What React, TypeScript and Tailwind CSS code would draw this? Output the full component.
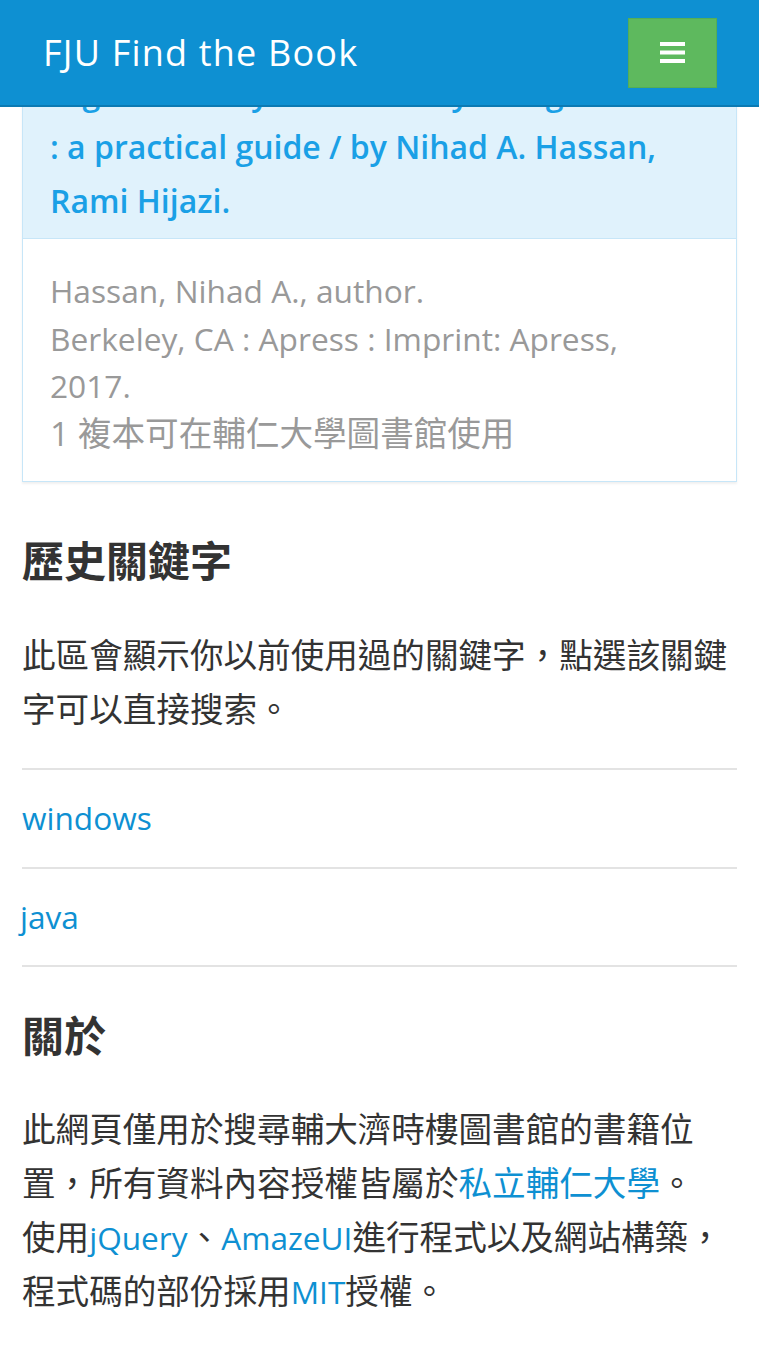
import React from "react";

function Hamburger() {
  return (
    <svg width="25" height="22" viewBox="0 0 25 22" aria-hidden="true">
      <rect x="0" y="0" width="25" height="4" fill="#fff" />
      <rect x="0" y="8.5" width="25" height="4" fill="#fff" />
      <rect x="0" y="17" width="25" height="4" fill="#fff" />
    </svg>
  );
}

export default function App() {
  return (
    <div className="relative min-h-[1350px] w-full overflow-hidden bg-white font-['Open_Sans','Noto_Sans_CJK_TC',sans-serif] text-[#333]">
      {/* fixed top bar lying over scrolled content */}
      <header className="absolute left-0 right-0 top-0 z-10 flex h-[107px] items-center justify-between border-b-2 border-[#0b7ab3] bg-[#0e90d2] pl-[43px] pr-[42px]">
        <span className="whitespace-nowrap text-[36px] font-medium leading-none tracking-[1.2px] text-white">FJU Find the Book</span>
        <button className="flex h-[70px] w-[89px] items-center justify-center border border-[#55ad55] bg-[#5eb95e]">
          <Hamburger />
        </button>
      </header>

      <main className="px-[22px] pt-[53px]">
        {/* result card */}
        <section className="border border-[#c7e6f8] shadow-[0_2px_2px_rgba(0,0,0,0.06)]">
          <div className="border-b border-[#c7e6f8] bg-[#e0f2fc] px-[27px] pb-[11px] pt-[12px]">
            <h3 className="whitespace-nowrap text-[32px] font-semibold leading-[53.76px] text-[#1aa0e6]">
              Digital Privacy and Security Using Windows
              <br />: a practical guide / by Nihad A. Hassan,
              <br />Rami Hijazi.
            </h3>
          </div>
          <div className="bg-white px-[27px] pb-[24px] pt-[28px] text-[31.7px] leading-[47.5px] text-[#999]">
            <div>Hassan, Nihad A., author.</div>
            <div>
              Berkeley, CA : Apress : Imprint: Apress,
              <br />
              2017.
            </div>
            <div className="text-[33.6px]">1 複本可在輔仁大學圖書館使用</div>
          </div>
        </section>

        {/* history keywords */}
        <h2 className="mt-[54px] text-[42px] font-bold leading-[50px] text-[#333]">歷史關鍵字</h2>
        <p className="mt-[43px] text-[33.6px] leading-[53.76px]">
          此區會顯示你以前使用過的關鍵字，點選該關鍵字可以直接搜索。
        </p>
        <ul className="mt-[31px] border-t-2 border-[#e3e3e3]">
          <li className="border-b-2 border-[#e3e3e3] py-[21.5px] text-[31.6px] leading-[53.76px]">
            <a className="text-[#0e90d2]" href="#">windows</a>
          </li>
          <li className="border-b-2 border-[#e3e3e3] py-[21.5px] text-[31.6px] leading-[53.76px]">
            <a className="-ml-[2px] text-[#0e90d2]" href="#">java</a>
          </li>
        </ul>

        {/* about */}
        <h2 className="mt-[44px] text-[42px] font-bold leading-[50px] text-[#333]">關於</h2>
        <p className="mt-[42px] pb-[40px] text-[33.6px] leading-[53.76px]">
          此網頁僅用於搜尋輔大濟時樓圖書館的書籍位置，所有資料內容授權皆屬於
          <a className="text-[#0e90d2]" href="#">私立輔仁大學</a>。
          <br />
          使用<a className="text-[31.6px] text-[#0e90d2]" href="#">jQuery</a>、<a className="text-[31.6px] text-[#0e90d2]" href="#">AmazeUI</a>進行程式以及網站構築，程式碼的部份採用
          <a className="text-[31.6px] text-[#0e90d2]" href="#">MIT</a>授權。
        </p>
      </main>
    </div>
  );
}
